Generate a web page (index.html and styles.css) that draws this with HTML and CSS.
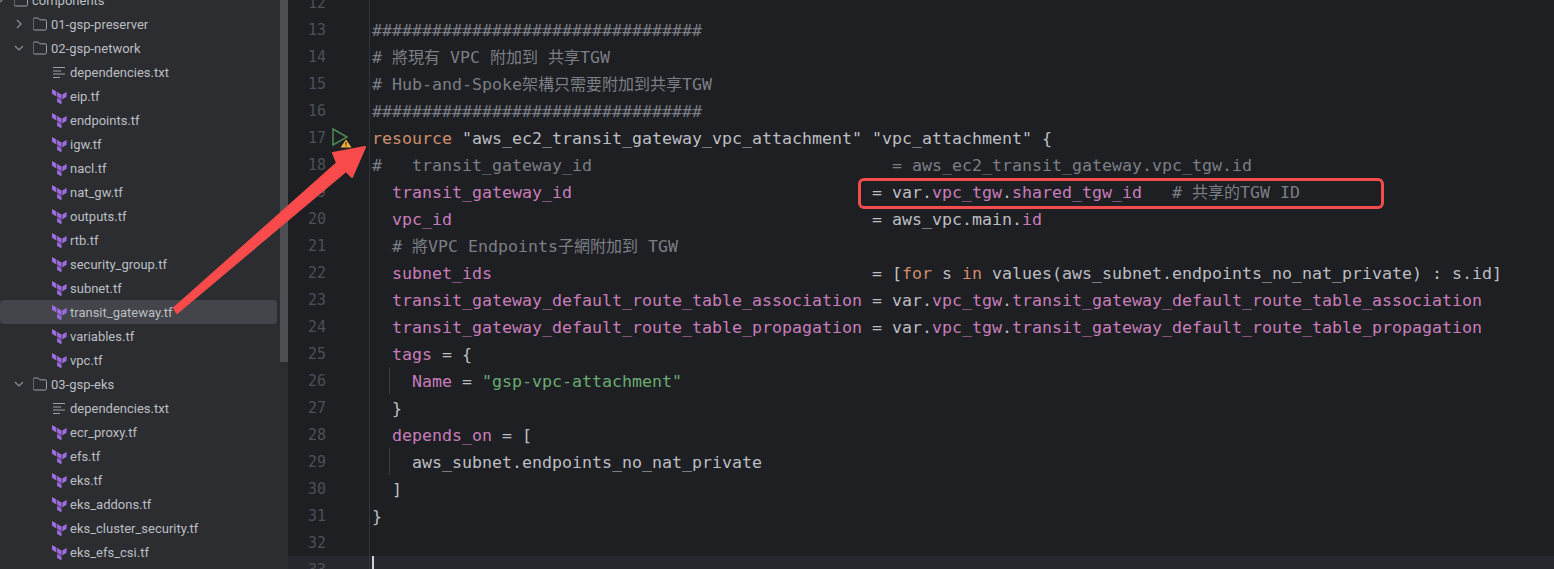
FILE: index.html
```html
<!DOCTYPE html>
<html lang="zh-Hant">
<head>
<meta charset="utf-8">
<title>transit_gateway.tf</title>
<link rel="stylesheet" href="styles.css">
</head>
<body>
<svg class="defs" width="0" height="0">
  <symbol id="tf" viewBox="0 0 15 15">
    <polygon points="0,0 4.4,2.6 4.4,7.4 0,4.8"/>
    <polygon points="5.1,3 9.5,5.6 9.5,10.4 5.1,7.8"/>
    <polygon points="10.2,5.6 14.6,3 14.6,7.8 10.2,10.4"/>
    <polygon points="5.1,8.7 9.5,11.2 9.5,15 8.8,15 5.1,12.9"/>
  </symbol>
  <symbol id="folder" viewBox="0 0 14 14">
    <path d="M1.5 1h3.6l1.7 1.8h5.2a1.5 1.5 0 0 1 1.5 1.5v7.2a1.5 1.5 0 0 1-1.5 1.5h-10.5a1.5 1.5 0 0 1-1.5-1.5v-9a1.5 1.5 0 0 1 1.5-1.5z" fill="none" stroke="#9da0a8" stroke-width="1"/>
  </symbol>
  <symbol id="txt" viewBox="0 0 14 14">
    <path d="M1 2.5h12M1 6h8M1 9h12M1 12.5h7" fill="none" stroke="#9da0a8" stroke-width="1"/>
  </symbol>
  <symbol id="open" viewBox="0 0 10 10">
    <path d="M1 3l4 4 4-4" fill="none" stroke="#8c8f96" stroke-width="1.2"/>
  </symbol>
  <symbol id="closed" viewBox="0 0 10 10">
    <path d="M3 1l4 4-4 4" fill="none" stroke="#8c8f96" stroke-width="1.2"/>
  </symbol>
</svg>

<div class="ide">
  <aside class="tree">
    <div class="row d0"><svg class="chev"><use href="#open"/></svg><svg class="ico"><use href="#folder"/></svg><span>components</span></div>
    <div class="row d1"><svg class="chev"><use href="#closed"/></svg><svg class="ico"><use href="#folder"/></svg><span>01-gsp-preserver</span></div>
    <div class="row d1"><svg class="chev"><use href="#open"/></svg><svg class="ico"><use href="#folder"/></svg><span>02-gsp-network</span></div>
    <div class="row d2"><svg class="ico"><use href="#txt"/></svg><span>dependencies.txt</span></div>
    <div class="row d2"><svg class="ico tf"><use href="#tf"/></svg><span>eip.tf</span></div>
    <div class="row d2"><svg class="ico tf"><use href="#tf"/></svg><span>endpoints.tf</span></div>
    <div class="row d2"><svg class="ico tf"><use href="#tf"/></svg><span>igw.tf</span></div>
    <div class="row d2"><svg class="ico tf"><use href="#tf"/></svg><span>nacl.tf</span></div>
    <div class="row d2"><svg class="ico tf"><use href="#tf"/></svg><span>nat_gw.tf</span></div>
    <div class="row d2"><svg class="ico tf"><use href="#tf"/></svg><span>outputs.tf</span></div>
    <div class="row d2"><svg class="ico tf"><use href="#tf"/></svg><span>rtb.tf</span></div>
    <div class="row d2"><svg class="ico tf"><use href="#tf"/></svg><span>security_group.tf</span></div>
    <div class="row d2"><svg class="ico tf"><use href="#tf"/></svg><span>subnet.tf</span></div>
    <div class="row d2 sel"><svg class="ico tf"><use href="#tf"/></svg><span>transit_gateway.tf</span></div>
    <div class="row d2"><svg class="ico tf"><use href="#tf"/></svg><span>variables.tf</span></div>
    <div class="row d2"><svg class="ico tf"><use href="#tf"/></svg><span>vpc.tf</span></div>
    <div class="row d1"><svg class="chev"><use href="#open"/></svg><svg class="ico"><use href="#folder"/></svg><span>03-gsp-eks</span></div>
    <div class="row d2"><svg class="ico"><use href="#txt"/></svg><span>dependencies.txt</span></div>
    <div class="row d2"><svg class="ico tf"><use href="#tf"/></svg><span>ecr_proxy.tf</span></div>
    <div class="row d2"><svg class="ico tf"><use href="#tf"/></svg><span>efs.tf</span></div>
    <div class="row d2"><svg class="ico tf"><use href="#tf"/></svg><span>eks.tf</span></div>
    <div class="row d2"><svg class="ico tf"><use href="#tf"/></svg><span>eks_addons.tf</span></div>
    <div class="row d2"><svg class="ico tf"><use href="#tf"/></svg><span>eks_cluster_security.tf</span></div>
    <div class="row d2"><svg class="ico tf"><use href="#tf"/></svg><span>eks_efs_csi.tf</span></div>
    <div class="thumb"></div>
  </aside>

  <main class="editor">
    <div class="ln"><span class="num">12</span><span class="mark"></span><code></code></div>
    <div class="ln"><span class="num">13</span><span class="mark"></span><code class="c">#################################</code></div>
    <div class="ln"><span class="num">14</span><span class="mark"></span><code class="c"># <span class="zh">將現有</span> VPC <span class="zh">附加到</span> <span class="zh">共享</span>TGW</code></div>
    <div class="ln"><span class="num">15</span><span class="mark"></span><code class="c"># Hub-and-Spoke<span class="zh">架構只需要附加到共享</span>TGW</code></div>
    <div class="ln"><span class="num">16</span><span class="mark"></span><code class="c">#################################</code></div>
    <div class="ln"><span class="num">17</span><span class="mark">
      <svg class="run" viewBox="0 0 20 20" width="20" height="20"><path d="M1 1L15 9L1 17Z" fill="none" stroke="#4b8a52" stroke-width="1.5"/><path d="M14 11.5L19.5 19.5H8.5Z" fill="#f2b33d"/><path d="M14 14v2.8M14 17.6v1" stroke="#1e1f22" stroke-width="1.1"/></svg>
    </span><code><span class="k">resource</span> "aws_ec2_transit_gateway_vpc_attachment" "vpc_attachment" {</code></div>
    <div class="ln"><span class="num">18</span><span class="mark"></span><code class="c">#   transit_gateway_id                              = aws_ec2_transit_gateway.vpc_tgw.id</code></div>
    <div class="ln"><span class="num">19</span><span class="mark"></span><code>  <span class="p">transit_gateway_id</span>                              = var.<span class="p">vpc_tgw</span>.<span class="p">shared_tgw_id</span>   <span class="c"># <span class="zh">共享的</span>TGW ID</span></code></div>
    <div class="ln"><span class="num">20</span><span class="mark"></span><code>  <span class="p">vpc_id</span>                                          = aws_vpc.main.<span class="p">id</span></code></div>
    <div class="ln"><span class="num">21</span><span class="mark"></span><code>  <span class="c"># <span class="zh">將</span>VPC Endpoints<span class="zh">子網附加到</span> TGW</span></code></div>
    <div class="ln"><span class="num">22</span><span class="mark"></span><code>  <span class="p">subnet_ids</span>                                      = [<span class="k">for</span> s <span class="k">in</span> values(aws_subnet.endpoints_no_nat_private) : s.id]</code></div>
    <div class="ln"><span class="num">23</span><span class="mark"></span><code>  <span class="p">transit_gateway_default_route_table_association</span> = var.<span class="p">vpc_tgw</span>.<span class="p">transit_gateway_default_route_table_association</span></code></div>
    <div class="ln"><span class="num">24</span><span class="mark"></span><code>  <span class="p">transit_gateway_default_route_table_propagation</span> = var.<span class="p">vpc_tgw</span>.<span class="p">transit_gateway_default_route_table_propagation</span></code></div>
    <div class="ln"><span class="num">25</span><span class="mark"></span><code>  <span class="p">tags</span> = {</code></div>
    <div class="ln guide"><span class="num">26</span><span class="mark"></span><code>    <span class="p">Name</span> = <span class="s">"gsp-vpc-attachment"</span></code></div>
    <div class="ln"><span class="num">27</span><span class="mark"></span><code>  }</code></div>
    <div class="ln"><span class="num">28</span><span class="mark"></span><code>  <span class="p">depends_on</span> = [</code></div>
    <div class="ln guide"><span class="num">29</span><span class="mark"></span><code>    aws_subnet.endpoints_no_nat_private</code></div>
    <div class="ln"><span class="num">30</span><span class="mark"></span><code>  ]</code></div>
    <div class="ln"><span class="num">31</span><span class="mark"></span><code>}</code></div>
    <div class="ln"><span class="num">32</span><span class="mark"></span><code></code></div>
    <div class="ln cur"><span class="num">33</span><span class="mark"></span><code><i class="caret"></i></code></div>
  </main>
</div>

<div class="callout"></div>
<svg class="arrow" width="1554" height="569" viewBox="0 0 1554 569">
  <polygon points="174,308 337,163 333,153 365,147 352,177 346,171 177,313"/>
</svg>
</body>
</html>
```
FILE: styles.css
```css
* { box-sizing: border-box; }
html, body { margin: 0; height: 569px; overflow: hidden; background: #1e1f22; }
.defs { position: absolute; }
.ide { display: flex; height: 569px; overflow: hidden; }

.tree {
  position: relative;
  flex: 0 0 288px;
  margin-top: -12px;
  height: 600px;
  background: #2b2d30;
  font: 13px/24px Roboto, sans-serif;
  color: #bcbec4;
  overflow: hidden;
}
.row { display: flex; align-items: center; height: 24px; width: 277px; white-space: nowrap; border-radius: 4px; }
.row span { padding-top: 2px; }
.row.sel { background: #43454a; }
.row.d0 { padding-left: 0; }
.row.d1 { padding-left: 14px; }
.row.d2 { padding-left: 52px; }
.chev { width: 10px; height: 10px; flex: none; margin-right: 9px; }
.d0 .chev { margin-left: -5px; }
.ico { width: 14px; height: 14px; flex: none; margin-right: 4px; }
.ico.tf { width: 15px; height: 15px; margin-right: 3px; fill: #9b6ce0; }
.thumb { position: absolute; left: 280px; top: 0; width: 8px; height: 374px; background: #4d4e51; }

.editor {
  flex: 1;
  min-width: 0;
  margin-top: -11px;
  font: 16.61px/27px "DejaVu Sans Mono", monospace;
  color: #bcbec4;
}
.ln { display: flex; height: 27px; white-space: pre; }
.num {
  flex: none; width: 38px; text-align: right; padding-top: 1px;
  font-size: 15px; color: #4b5059;
}
.mark { flex: none; width: 43px; position: relative; display: block; }
.ln code {
  flex: 1; font: inherit; padding: 1px 0 0 2px; white-space: pre;
  border-left: 1px solid #313438;
  position: relative;
}
.cur { background: #26282e; }
.caret { position: absolute; left: 2px; top: 0; width: 2px; height: 27px; background: #ced0d6; }
.guide code::before { content: ""; position: absolute; left: 19px; top: 0; bottom: 0; width: 1px; background: #393b40; }
.run { position: absolute; left: 6px; top: 4px; }

.c { color: #7a7e85; }
.k { color: #cf8e6d; }
.p { color: #c77dbb; }
.s { color: #6aab73; }
.zh { font-family: "Noto Sans CJK TC", sans-serif; font-size: 16px; line-height: 0; }

.callout {
  position: absolute; left: 858px; top: 178px; width: 526px; height: 31px;
  border: 3px solid #f44c4c; border-radius: 6px;
}
.arrow { position: absolute; left: 0; top: 0; fill: #f94b4b; stroke: #f94b4b; stroke-width: 2; stroke-linejoin: round; pointer-events: none; }
```
